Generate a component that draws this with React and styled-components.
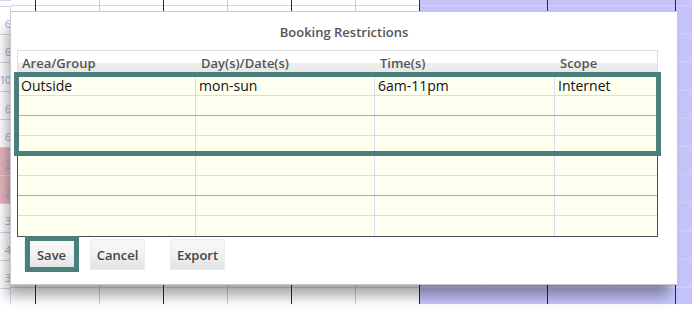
import React from 'react';
import styled, { createGlobalStyle } from 'styled-components';

const GlobalStyle = createGlobalStyle`
  html, body {
    margin: 0;
    padding: 0;
    background: #fff;
    overflow: hidden;
  }
  * {
    box-sizing: border-box;
  }
`;

const gutterCounts = ['6', '6', '10', '6', '6', '2', '2', '3', '4', '3', ''];
const blockedRows = [5, 6];

const columns = ['Area/Group', 'Day(s)/Date(s)', 'Time(s)', 'Scope'];

const restrictions = [
  ['Outside', 'mon-sun', '6am-11pm', 'Internet'],
  ['', '', '', ''],
  ['', '', '', ''],
  ['', '', '', ''],
  ['', '', '', ''],
  ['', '', '', ''],
  ['', '', '', ''],
  ['', '', '', ''],
];

export default function App() {
  return (
    <Page>
      <GlobalStyle />
      <Schedule>
        <Gutter>
          {gutterCounts.map((n, i) => (
            <GutterCell key={i} $blocked={blockedRows.includes(i)}>
              {n}
            </GutterCell>
          ))}
        </Gutter>
        <Grid />
      </Schedule>

      <Dialog>
        <Title>Booking Restrictions</Title>

        <TableWrap>
          <HeaderRow>
            {columns.map((c) => (
              <HeaderCell key={c}>{c}</HeaderCell>
            ))}
          </HeaderRow>
          <Body>
            {restrictions.map((row, i) => (
              <Row key={i} $major={i % 2 === 1} $last={i === restrictions.length - 1}>
                {row.map((cell, j) => (
                  <Cell key={j} $last={j === row.length - 1}>
                    {cell}
                  </Cell>
                ))}
              </Row>
            ))}
          </Body>
          <Highlight $left={-3} $top={22} $width={647} $height={84} />
        </TableWrap>

        <ButtonBar>
          <Button>Save</Button>
          <Button>Cancel</Button>
          <Button $spaced>Export</Button>
          <Highlight $left={14} $top={-1} $width={54} $height={36} />
        </ButtonBar>
      </Dialog>
    </Page>
  );
}

// Styling -----------------------------------

const Page = styled.div`
  position: relative;
  width: 692px;
  height: 314px;
  overflow: hidden;
  font-family: 'Open Sans', 'Noto Sans', sans-serif;
`;

const Schedule = styled.div`
  display: flex;
  height: 304px;
  overflow: hidden;
`;

const Gutter = styled.div`
  width: 11px;
  flex-shrink: 0;
  padding-top: 5px;
  display: flex;
  flex-direction: column;
  border-top: 1px solid #d4d4f2;
`;

const GutterCell = styled.div`
  height: 28.2px;
  flex-shrink: 0;
  display: flex;
  justify-content: flex-end;
  align-items: center;
  padding-top: 6px;
  font-size: 11px;
  letter-spacing: -1px;
  color: #a9a9e2;
  background: ${(p) => (p.$blocked ? '#e6b6bd' : '#fff')};
  border-top: 1px solid #d4d4f2;
  border-right: 1px solid #d4d4f2;
`;

const Grid = styled.div`
  flex: 1;
  background-color: #fff;
  background-image:
    linear-gradient(to right, #1c1ca6 0 1px, transparent 1px),
    linear-gradient(to right, #c6c6ee 0 1px, transparent 1px),
    linear-gradient(to bottom, #d2d2f2 0 1px, transparent 1px),
    linear-gradient(to right, transparent 408px, #c4c4fa 408px);
  background-size: 128px 100%, 128px 100%, 100% 28.2px, 100% 100%;
  background-position: 24px 0, 88px 0, 0 5px, 0 0;
  background-repeat: repeat-x, repeat-x, repeat-y, no-repeat;
`;

const Dialog = styled.div`
  position: absolute;
  left: 10px;
  top: 11px;
  width: 668px;
  height: 274px;
  background: #fff;
  border: 1px solid #c9c9c9;
  box-shadow: -6px 14px 12px -3px rgba(0, 0, 0, 0.34);
  display: flex;
  flex-direction: column;
`;

const Title = styled.div`
  height: 38px;
  display: flex;
  align-items: center;
  justify-content: center;
  padding-top: 1px;
  font-size: 13px;
  font-weight: 600;
  color: #555;
`;

const TableWrap = styled.div`
  position: relative;
  width: 641px;
  margin-left: 6px;
`;

const HeaderRow = styled.div`
  display: grid;
  grid-template-columns: 179px 179px 180px 1fr;
  height: 26px;
  border: 1px solid #dedede;
  border-bottom: none;
  background: linear-gradient(to bottom, #fff 0, #fff 46%, #ededed 50%, #e6e6e6 100%);
`;

const HeaderCell = styled.div`
  display: flex;
  align-items: flex-end;
  padding: 0 0 4px 4px;
  font-size: 13px;
  font-weight: 600;
  color: #555;
`;

const Body = styled.div`
  border: 1px solid #4c4c5e;
  border-top: none;
  background: #fffff0;
`;

const Row = styled.div`
  display: grid;
  grid-template-columns: 178px 179px 180px 1fr;
  height: 20px;
  border-bottom: ${(p) => (p.$last ? 'none' : `1px solid ${p.$major ? '#a8a4d8' : '#dcd9ef'}`)};
`;

const Cell = styled.div`
  display: flex;
  align-items: center;
  padding-left: 3px;
  font-size: 14px;
  color: #111;
  white-space: nowrap;
  border-right: ${(p) => (p.$last ? 'none' : '1px solid #dcd9ef')};
`;

const Highlight = styled.div`
  position: absolute;
  left: ${(p) => p.$left}px;
  top: ${(p) => p.$top}px;
  width: ${(p) => p.$width}px;
  height: ${(p) => p.$height}px;
  border: 5px solid #4b7f7b;
  pointer-events: none;
`;

const ButtonBar = styled.div`
  position: relative;
  display: flex;
  gap: 11px;
  padding: 2px 0 0 13px;
`;

const Button = styled.button`
  width: 55px;
  height: 31px;
  margin-left: ${(p) => (p.$spaced ? '14px' : '0')};
  padding: 0;
  border: 1px solid #ececec;
  border-radius: 0;
  background: linear-gradient(to bottom, #f8f8f8 0, #f3f3f3 45%, #e2e2e2 100%);
  font-family: 'Open Sans', 'Noto Sans', sans-serif;
  font-size: 13px;
  font-weight: 600;
  color: #444;
  cursor: pointer;
`;
